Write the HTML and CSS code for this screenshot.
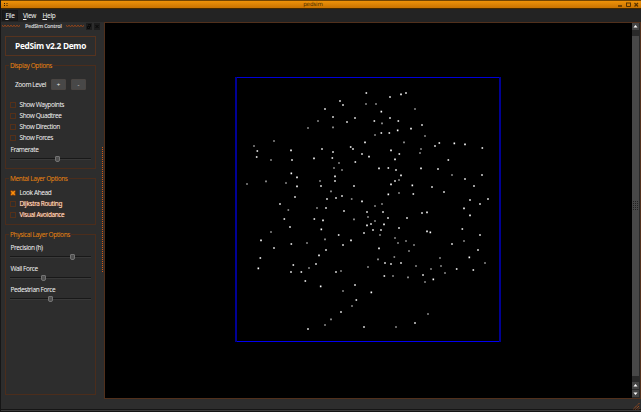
FILE: index.html
```html
<!DOCTYPE html>
<html lang="en">
<head>
<meta charset="utf-8">
<title>pedsim</title>
<link rel="stylesheet" href="styles.css">
</head>
<body>
<div class="window">
  <header class="titlebar">
    <svg class="app-mark" width="6" height="8"><path d="M1 3.500h1M3.500 3.500h1M1 5.500h1M3.500 5.500h1" stroke="#2a1b08"/></svg>
    <span class="title">pedsim</span>
    <svg class="win-buttons" width="24" height="9" fill="none" stroke="#573300"><path d="M1 6h4" stroke-width="1.5"/><path d="M9.5 3v3.5h4V3M9 3h5" /><path d="M17.5 3l3.5 3.5M21 3l-3.5 3.5" stroke-width="1.2"/></svg>
  </header>
  <nav class="menubar">
    <span class="menu menu-active"><u>F</u>ile</span><span class="menu"><u>V</u>iew</span><span class="menu"><u>H</u>elp</span>
  </nav>
  <main class="body">
    <aside class="dock">
      <div class="dock-title">
        <svg width="18" height="4" class="wave"><path d="M0 1l1.5 2L3 1l1.5 2L6 1l1.5 2L9 1l1.5 2L12 1l1.5 2L15 1l1.5 2L18 1"/></svg>
        <span class="dock-name">PedSim Control</span>
        <svg width="18" height="4" class="wave"><path d="M0 1l1.5 2L3 1l1.5 2L6 1l1.5 2L9 1l1.5 2L12 1l1.5 2L15 1l1.5 2L18 1"/></svg>
        <svg class="dock-buttons" width="14" height="7" fill="none" stroke="#090909"><path d="M0 0h6v7H0zM8 0h6v7H8z" fill="#1d1d1d" stroke="none"/><path d="M2.500 2.500V1.500h2v2h-1M1.500 3.500h2v2h-2z"/><path d="M9.500 2l3 3M12.500 2l-3 3"/></svg>
      </div>
      <h1 class="demo">PedSim v2.2 Demo</h1>
      <section class="group display">
        <h2>Display Options</h2>
        <div class="zoom"><span>Zoom Level</span><button>+</button><button>-</button></div>
        <div class="check"><i></i>Show Waypoints</div>
        <div class="check"><i></i>Show Quadtree</div>
        <div class="check"><i></i>Show Direction</div>
        <div class="check"><i></i>Show Forces</div>
        <div class="label">Framerate</div>
        <div class="slider at-framerate"><b></b></div>
      </section>
      <section class="group mental">
        <h2>Mental Layer Options</h2>
        <div class="check"><i><svg width="6" height="6"><path d="M1.200 1.200l3.600 3.600M4.800 1.200L1.200 4.800" stroke="#ff8c08" stroke-width="1.700"/></svg></i>Look Ahead</div>
        <div class="check warm"><i></i>Dijkstra Routing</div>
        <div class="check warm"><i></i>Visual Avoidance</div>
      </section>
      <section class="group physical">
        <h2>Physical Layer Options</h2>
        <div class="label">Precision (h)</div>
        <div class="slider at-precision"><b></b></div>
        <div class="label">Wall Force</div>
        <div class="slider at-wall"><b></b></div>
        <div class="label">Pedestrian Force</div>
        <div class="slider at-pedestrian"><b></b></div>
      </section>
      <div class="splitter"></div>
    </aside>
    <div class="view">
      <svg class="scene" width="526" height="375" viewBox="105 23 526 375">
        <path d="M236 77.500h264" stroke="#0000d8"/>
        <path d="M236 341.500h264" stroke="#0000f0"/>
        <path d="M236 77v265M500 77v265" stroke="#000094" stroke-width="2"/>
        <g transform="translate(230 70) scale(.33333)">
          <path class="near" d="M330 93h0M339 105h0M285 117h0M309 141h0M375 144h0M351 156h0M82 243h0M80 261h0M183 241h0M186 270h0M276 237h0M309 246h0M252 265h0M307 264h0M362 231h0M369 237h0M376 276h0M184 310h0M201 322h0M201 349h0M315 319h0M315 333h0M273 348h0M372 348h0M195 381h0M291 387h0M318 384h0M336 378h0M150 402h0M288 414h0"/>
          <path class="far" d="M264 153h0M234 174h0M309 172h0M132 213h0M72 228h0M123 270h0M108 334h0M51 342h0M168 339h0M327 279h0M312 294h0M336 300h0M270 333h0M303 364h0M365 387h0M261 414h0"/>
        </g>
        <g transform="translate(360 70) scale(.33333)">
          <path class="near" d="M19 69h0M123 73h0M138 69h0M90 81h0M64 125h0M90 144h0M43 153h0M115 153h0M186 165h0M153 176h0M113 181h0M64 189h0M88 189h0M15 217h0M238 219h0M283 220h0M315 223h0M225 228h0M367 234h0M93 241h0M6 252h0M118 252h0M27 260h0M105 268h0M265 270h0M57 295h0M85 294h0M108 300h0M183 295h0M234 297h0M366 315h0M123 316h0M315 327h0M105 333h0M93 343h0M157 346h0M216 351h0M342 348h0M252 366h0M85 373h0M160 372h0M384 387h0M330 390h0M6 394h0M360 402h0M312 415h0"/>
          <path class="far" d="M18 102h0M48 102h0M165 117h0M66 160h0M45 195h0M195 198h0M132 217h0M183 237h0M180 249h0M276 315h0M117 330h0M117 369h0M66 402h0M45 408h0"/>
        </g>
        <g transform="translate(230 205) scale(.33333)">
          <path class="near" d="M342 18h0M163 42h0M253 42h0M279 46h0M180 66h0M274 73h0M326 90h0M93 106h0M363 106h0M132 129h0M184 117h0M339 120h0M288 135h0M267 151h0M91 159h0M85 190h0M190 180h0M258 177h0M183 201h0M214 201h0M318 201h0M226 228h0M272 244h0M375 240h0M379 285h0M333 321h0M234 372h0"/>
          <path class="far" d="M175 15h0M372 43h0M123 81h0M285 103h0M231 114h0M237 189h0M333 198h0M339 258h0M366 303h0M303 343h0M285 360h0"/>
        </g>
        <g transform="translate(360 205) scale(.33333)">
          <path class="near" d="M21 21h0M69 21h0M186 24h0M201 22h0M330 31h0M84 39h0M141 39h0M33 57h0M21 61h0M72 58h0M39 75h0M63 75h0M117 69h0M307 72h0M12 84h0M201 79h0M211 82h0M360 90h0M276 117h0M57 130h0M354 135h0M328 157h0M75 174h0M93 177h0M123 174h0M73 213h0M189 210h0M290 192h0M340 195h0M220 223h0M34 262h0M165 354h0M12 366h0"/>
          <path class="far" d="M24 36h0M45 48h0M60 90h0M105 99h0M114 114h0M138 108h0M162 120h0M147 138h0M54 163h0M103 156h0M24 186h0M99 213h0M144 217h0M168 183h0M213 192h0M240 159h0M243 183h0M255 204h0M312 108h0M375 174h0M195 231h0M204 327h0M108 366h0"/>
        </g>
      </svg>
      <div class="scrollbar">
        <div class="arrow"><svg width="7" height="7"><path d="M1.500 4.500l2-2.500 2 2.500z" fill="#fff"/></svg></div>
        <div class="thumb"><span class="grip"></span></div>
        <div class="arrow"><svg width="7" height="7"><path d="M1.500 4.500l2-2.500 2 2.500z" fill="#fff"/></svg></div>
        <div class="arrow"><svg width="7" height="7"><path d="M1.500 2.500l2 2.500 2-2.500z" fill="#fff"/></svg></div>
      </div>
    </div>
  </main>
  <footer class="status"><svg width="7" height="7"><path d="M0 6.500L6.500 0M2.500 6.500l4-4M5 6.500L6.500 5" stroke="#b9521a" stroke-dasharray="1.200 .7"/></svg></footer>
</div>
</body>
</html>
```
FILE: styles.css
```css
* { box-sizing: border-box; }
body { margin: 0; overflow: hidden; background: #2d2d2d; color: #f0f0f0; font: 6.5px/8px "Noto Sans", "Open Sans", sans-serif; letter-spacing: -.4px; }
svg { display: block; flex: none; }
.window { width: 641px; height: 412px; display: flex; flex-direction: column; border-left: 1px solid #161616; }
.titlebar { height: 9px; flex: none; display: flex; align-items: flex-start; justify-content: space-between; padding-left: 2px; background: linear-gradient(#764600 0 1px, #ee9209 1px, #c97300 8px, #432900 8px); }
.title { margin-left: 0; font: 5.6px/9px "DejaVu Sans", sans-serif; letter-spacing: -.15px; color: #4d2f00; }
.menubar { height: 13px; flex: none; display: flex; padding: 1px 0 0 1px; background: #232323; }
.menu { height: 11px; width: 16px; line-height: 12px; text-align: center; margin-right: 3.5px; letter-spacing: -.3px; }
.menu-active { background: #1b1b1b; outline: 1px solid #171717; outline-offset: -1px; }
.menu u { text-underline-offset: 1px; text-decoration-thickness: 1px; }
.body { height: 377px; flex: none; display: flex; }
.dock { position: relative; width: 103px; flex: none; padding: 0 8px 0 4px; }
.dock-title { height: 8px; width: 98px; margin-left: -3px; display: flex; align-items: center; gap: 4px; font: bold 5.5px/8px "Open Sans", sans-serif; color: #c4c4c4; white-space: nowrap; }
.dock-name { width: 38px; margin-left: 1px; margin-right: -1px; }
.dock-buttons { margin-left: -2px; }
.wave path { fill: none; stroke: #8c431c; stroke-width: 1; }
.demo { height: 20px; margin: 6px 0 0; border: 1px solid #56331f; text-align: center; font: bold 8.300px/18px "Open Sans", sans-serif; letter-spacing: -.3px; color: #fff; white-space: nowrap; }
.group { position: relative; border: 1px solid #4b2d1c; padding: 0 4px; }
.group h2 { position: absolute; left: 3px; top: -4px; margin: 0; padding: 0 1px; background: #2d2d2d; font: 6.5px/8px "Noto Sans", sans-serif; color: #e8820f; white-space: nowrap; }
.display { height: 104px; margin-top: 9px; padding-top: 13px; }
.zoom { display: flex; align-items: center; height: 11px; margin-bottom: 9px; padding-left: 5px; }
.zoom span { width: 36px; white-space: nowrap; }
.zoom button { width: 15px; height: 11px; margin: 0 5px 0 0; padding: 0; border: 1px solid #4a4542; border-radius: 1px; background: #484848; color: #eee; font: 6px/8px "Open Sans", sans-serif; }
.check { height: 11px; display: flex; align-items: center; gap: 3.5px; white-space: nowrap; }
.check i { width: 6px; height: 6px; border: 1px solid #553019; flex: none; }
.check i svg { margin: -1px; }
.warm { color: #ffe4d6; text-shadow: 0 0 1px #d84c10; }
.label { height: 8px; margin-top: 2px; padding-left: .5px; line-height: 10px; white-space: nowrap; }
.slider { height: 8px; margin-top: 2px; width: 81px; display: flex; align-items: center; background: linear-gradient(#181818, #181818) 0 3px / 100% 1px no-repeat, linear-gradient(#393939, #393939) 0 4px / 100% 1px no-repeat; }
.slider b { width: 5px; height: 6px; border: 1px solid #737373; border-radius: 1px 1px 2px 2px; background: #505050; }
.at-framerate b { margin-left: 45px; }
.at-precision b { margin-left: 60px; }
.at-wall b { margin-left: 31px; }
.at-pedestrian b { margin-left: 38px; }
.mental { height: 47px; margin-top: 9px; padding-top: 8px; }
.physical { height: 161px; margin-top: 9px; padding-top: 8px; }
.physical .slider { margin-bottom: 3px; }
.physical .label { margin-top: 0; }
.splitter { position: absolute; right: 1px; top: 125px; width: 1px; height: 125px; background: repeating-linear-gradient(#d8560f 0 1px, #2d2d2d 1px 2px); }
.view { width: 537px; display: flex; border: 1px solid #51301c; background: #000; }
.near, .far { fill: none; stroke-linecap: square; stroke-width: 4.800; stroke: #fff; }
.far { stroke: #a5a5a5; }
.scrollbar { width: 8px; margin-left: 1px; display: flex; flex-direction: column; background: #292929; }
.arrow { height: 7px; width: 7px; flex: none; background: #444; margin-bottom: 1px; }
.thumb { flex: 1; width: 7px; margin: 5px 0 6px; display: flex; align-items: center; justify-content: center; background: #484848; }
.grip { width: 5px; height: 10px; background: repeating-linear-gradient(90deg, transparent 0 1px, #484848 1px 2px), repeating-linear-gradient(#222 0 1px, #484848 1px 2px); }
.status { height: 13px; flex: none; display: flex; justify-content: flex-end; padding: 4px 1px 0 0; background: linear-gradient(#2d2d2d 0 10px, #151515 10px 11px, #3a3a3a 11px 12px, #151515 12px); }
```
